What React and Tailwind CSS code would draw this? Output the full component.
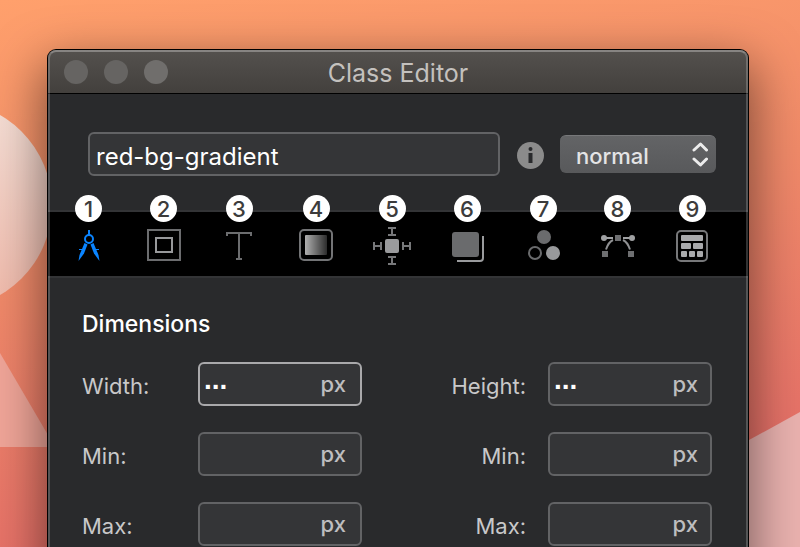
import React, { useState } from 'react';

const CompassIcon = () => (
  <svg width="40" height="40" viewBox="0 0 40 40" fill="none" stroke="#0a84ff">
    <path d="M20 5v5" strokeWidth="2" />
    <circle cx="20" cy="14" r="4" strokeWidth="2" />
    <path d="M15.5 18l3 1.5-3.5 9L9.5 36l1-6z" fill="#0a84ff" stroke="none" />
    <path d="M24.5 18l-3 1.5 3.5 9L30.5 36l-1-6z" fill="#0a84ff" stroke="none" />
    <path d="M10 24.5h5M25 24.5h5" strokeWidth="1" />
  </svg>
);

const BoxIcon = () => (
  <svg width="40" height="40" viewBox="0 0 40 40" fill="none">
    <rect x="4" y="5" width="32" height="30" stroke="#6c6d6f" strokeWidth="2" />
    <rect x="12" y="13" width="16" height="14" stroke="#98999b" strokeWidth="2" />
  </svg>
);

const TextIcon = () => (
  <svg width="40" height="40" viewBox="0 0 40 40" fill="none" stroke="#6c6d6f" strokeWidth="2">
    <path d="M8 11V8h24v3M20 8v26M17 34h6" />
  </svg>
);

const GradientIcon = () => (
  <svg width="40" height="40" viewBox="0 0 40 40" fill="none">
    <defs>
      <linearGradient id="fade" x1="0" x2="1" y1="0" y2="0">
        <stop offset="0" stopColor="#b0b0b0" />
        <stop offset="1" stopColor="#2c2c2c" />
      </linearGradient>
    </defs>
    <rect x="4" y="5" width="32" height="30" rx="4" stroke="#737476" strokeWidth="2" />
    <rect x="9" y="10" width="22" height="20" rx="1" fill="url(#fade)" />
  </svg>
);

const SpacingIcon = () => (
  <svg width="40" height="40" viewBox="0 0 40 40" fill="none" stroke="#77787a" strokeWidth="2">
    <rect x="13" y="14" width="14" height="14" rx="2" fill="#9a9b9d" stroke="none" />
    <path d="M16 3h8M20 3v7M16 10h8M16 32h8M20 32v7M16 39h8" />
    <path d="M2 17v8M2 21h7M9 17v8M31 17v8M31 21h7M38 17v8" />
  </svg>
);

const LayersIcon = () => (
  <svg width="40" height="40" viewBox="0 0 40 40" fill="none">
    <path d="M36 11v22a3 3 0 0 1-3 3H10" stroke="#9a9b9d" strokeWidth="2" />
    <rect x="5" y="7" width="27" height="25" rx="3" fill="#6a6b6d" />
  </svg>
);

const CirclesIcon = () => (
  <svg width="40" height="40" viewBox="0 0 40 40" fill="none">
    <circle cx="21" cy="12" r="7" fill="#6a6b6d" />
    <circle cx="12" cy="28" r="6" stroke="#6a6b6d" strokeWidth="2" />
    <circle cx="30" cy="28" r="7" fill="#98999b" />
  </svg>
);

const CurveIcon = () => (
  <svg width="40" height="40" viewBox="0 0 40 40" fill="none">
    <path d="M6 13h9M25 13h9" stroke="#a0a1a3" strokeWidth="2" />
    <path d="M8 24.5Q10.5 17 15 15M25 15Q29.500 17 32 24.500" stroke="#8f9092" strokeWidth="2" />
    <circle cx="6" cy="13" r="3" fill="#a0a1a3" />
    <circle cx="34" cy="13" r="3" fill="#a0a1a3" />
    <path d="M17 10h6v6h-6zM4 26h6v6H4zM30 26h6v6h-6z" fill="#6e6f71" />
  </svg>
);

const CalculatorIcon = () => (
  <svg width="40" height="40" viewBox="0 0 40 40" fill="none">
    <rect x="4" y="6" width="30" height="30" rx="4" stroke="#77787a" strokeWidth="2" />
    <g fill="#a9aaac">
      <rect x="8" y="10" width="22" height="6" rx="1" />
      <rect x="8" y="18" width="10" height="6" rx="1" />
      <rect x="20" y="18" width="10" height="6" rx="1" />
      <rect x="8" y="26" width="6" height="6" rx="1" />
      <rect x="16" y="26" width="6" height="6" rx="1" />
      <rect x="24" y="26" width="6" height="6" rx="1" />
    </g>
  </svg>
);

const tabs = [
  { name: 'Dimensions', icon: CompassIcon },
  { name: 'Box', icon: BoxIcon },
  { name: 'Text', icon: TextIcon },
  { name: 'Background', icon: GradientIcon },
  { name: 'Spacing', icon: SpacingIcon },
  { name: 'Shadow', icon: LayersIcon },
  { name: 'Filters', icon: CirclesIcon },
  { name: 'Transitions', icon: CurveIcon },
  { name: 'Layout', icon: CalculatorIcon },
];

const Wallpaper = () => (
  <svg className="absolute left-0 top-0 w-full h-full" viewBox="0 0 800 547" preserveAspectRatio="none">
    <defs>
      <linearGradient id="wall" gradientUnits="userSpaceOnUse" x1="0" y1="0" x2="90" y2="547">
        <stop offset="0" stopColor="#ffa06c" />
        <stop offset="0.5" stopColor="#f08a69" />
        <stop offset="1" stopColor="#e67168" />
      </linearGradient>
      <linearGradient id="moon" x1="0" x2="0" y1="0" y2="1">
        <stop offset="0" stopColor="#f5dfd6" />
        <stop offset="1" stopColor="#f0b9aa" />
      </linearGradient>
    </defs>
    <rect width="800" height="547" fill="url(#wall)" />
    <circle cx="-52" cy="205" r="104" fill="url(#moon)" />
    <path d="M0 353L55 447H0z" fill="#f0a598" />
    <path d="M700 467L800 412V547H700z" fill="#eab2af" />
  </svg>
);

function Field({ id, label, value, onChange, active, alignRight }) {
  return (
    <div className="flex items-center">
      <label
        htmlFor={id}
        className={`text-[22px] leading-7 pt-1 text-[#c8c8c9] ${alignRight ? 'w-25 mr-[22px] text-right' : 'w-29'}`}
      >
        {label}
      </label>
      <div className="relative">
        <input
          id={id}
          type="text"
          value={value}
          onChange={onChange}
          className={`block w-41 h-11 rounded-md border-2 bg-[#343537] pl-1 pr-12 pb-2 font-['Liberation_Sans',sans-serif] text-[28px] font-bold text-white outline-none ${
            active ? 'border-[#a9a9ab]' : 'border-[#626365]'
          }`}
        />
        <span
          className={`absolute top-2 text-[22px] leading-7 font-medium text-[#bdbdbf] ${alignRight ? 'right-3.5' : 'right-4'}`}
        >
          px
        </span>
      </div>
    </div>
  );
}

function App() {
  const [className, setClassName] = useState('red-bg-gradient');
  const [mode, setMode] = useState('normal');
  const [size, setSize] = useState({
    width: '...',
    minWidth: '',
    maxWidth: '',
    height: '...',
    minHeight: '',
    maxHeight: '',
  });

  const update = (key) => (e) => setSize((prev) => ({ ...prev, [key]: e.target.value }));

  return (
    <div className="relative h-screen overflow-hidden pt-[50px] pl-12 pr-[52px] font-['Inter',sans-serif]">
      <Wallpaper />

      <div className="relative rounded-t-lg bg-[#292a2c] shadow-[0_0_0_1px_#000,0_18px_50px_4px_rgba(0,0,0,0.5)]">
        {/* Title bar */}
        <div className="relative flex items-center justify-center h-11 rounded-t-lg border-b border-black bg-linear-to-b from-[#54514e] to-[#43403d]">
          <div className="absolute left-4 flex gap-4">
            <button aria-label="Close" className="w-6 h-6 rounded-full bg-[#666462]" />
            <button aria-label="Minimize" className="w-6 h-6 rounded-full bg-[#666462]" />
            <button aria-label="Zoom" className="w-6 h-6 rounded-full bg-[#706e6c]" />
          </div>
          <h1 className="pt-0.5 text-[25px] leading-8 text-[#c4c1be]">Class Editor</h1>
        </div>

        {/* Class name */}
        <div className="flex items-center gap-4 pt-[38px] pb-[34px] pl-10 pr-8">
          <input
            type="text"
            aria-label="Class name"
            value={className}
            onChange={(e) => setClassName(e.target.value)}
            className="flex-1 min-w-0 h-11 rounded-md border-2 border-[#626365] bg-[#343537] px-1.5 pt-1 text-2xl text-white outline-none"
          />
          <button aria-label="Info" className="pt-0.5">
            <svg width="28" height="28" viewBox="0 0 28 28">
              <circle cx="14.5" cy="14.5" r="13.5" fill="#8b8b8b" />
              <circle cx="14.5" cy="8" r="2" fill="#292a2c" />
              <path d="M12.5 12h4v10h-4z" fill="#292a2c" />
            </svg>
          </button>
          <div className="relative">
            <select
              aria-label="State"
              value={mode}
              onChange={(e) => setMode(e.target.value)}
              className="block appearance-none w-39 h-[38px] rounded-md bg-linear-to-b from-[#636466] to-[#58595b] border-t border-[#77787a] pl-4 pt-0.5 text-[22px] leading-7 font-medium text-[#e4e4e5] outline-none"
            >
              <option>normal</option>
              <option>hover</option>
              <option>active</option>
              <option>focus</option>
            </select>
            <svg
              className="absolute right-2 top-[7px] pointer-events-none"
              width="16" height="26" viewBox="0 0 16 26"
              fill="none" stroke="#ececec" strokeWidth="3" strokeLinecap="round" strokeLinejoin="round"
            >
              <path d="M2 8l6.500-6 6 6M2 17l6.500 6 6-6" />
            </svg>
          </div>
        </div>

        {/* Toolbar */}
        <nav className="grid grid-cols-[75fr_75fr_76fr_78fr_74fr_76fr_76fr_73fr_77fr] pl-[3px] pr-[17px] bg-black border-y-2 border-[#333436]">
          {tabs.map((tab, i) => (
            <button key={tab.name} aria-label={tab.name} className="relative flex items-center justify-center h-16 pt-0.5">
              <span className="absolute -top-[17px] flex items-center justify-center w-[27px] h-[27px] rounded-full bg-white text-[22px] leading-7 font-medium text-[#3c3c3c]">
                {i + 1}
              </span>
              <tab.icon />
            </button>
          ))}
        </nav>

        {/* Dimensions */}
        <section className="pt-8 pb-10 pl-[34px] pr-9">
          <h2 className="text-[23px] leading-7 font-medium text-white">Dimensions</h2>
          <div className="flex justify-between mt-6">
            <div className="flex flex-col gap-[26px]">
              <Field id="width" label="Width:" value={size.width} onChange={update('width')} active />
              <Field id="min-width" label="Min:" value={size.minWidth} onChange={update('minWidth')} />
              <Field id="max-width" label="Max:" value={size.maxWidth} onChange={update('maxWidth')} />
            </div>
            <div className="flex flex-col gap-[26px]">
              <Field id="height" label="Height:" value={size.height} onChange={update('height')} alignRight />
              <Field id="min-height" label="Min:" value={size.minHeight} onChange={update('minHeight')} alignRight />
              <Field id="max-height" label="Max:" value={size.maxHeight} onChange={update('maxHeight')} alignRight />
            </div>
          </div>
        </section>

        {/* Window edge highlight */}
        <div className="absolute inset-0 pointer-events-none rounded-t-lg border-x-2 border-t-2 border-x-white/20 border-t-white/30" />
      </div>
    </div>
  );
}

export default App;
